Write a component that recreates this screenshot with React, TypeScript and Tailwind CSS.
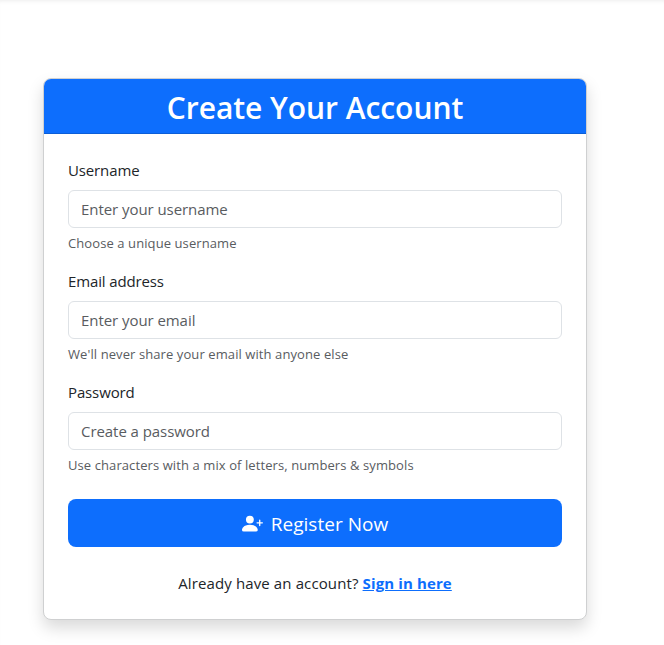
import { BsPersonPlusFill } from "react-icons/bs";

const fields = [
  { id: "username", label: "Username", type: "text", placeholder: "Enter your username", help: "Choose a unique username" },
  { id: "email", label: "Email address", type: "email", placeholder: "Enter your email", help: "We'll never share your email with anyone else" },
  { id: "password", label: "Password", type: "password", placeholder: "Create a password", help: "Use characters with a mix of letters, numbers & symbols" },
];

export default function App() {
  return (
    <div className="h-[645px] overflow-hidden bg-white pl-[43px] pt-[78px] font-['Open_Sans','Noto_Sans',sans-serif] text-[15px] text-[#212529] shadow-[inset_0_4px_4px_-3px_rgba(0,0,0,0.075)]">
      <main className="h-[542px] w-[544px] rounded-lg border border-[#cfd0d1] bg-white shadow-[0_8px_16px_rgba(0,0,0,0.15)]">
        <header className="flex h-[55px] items-center justify-center rounded-t-[7px] border-b border-[#0b5ed7] bg-[#0d6efd] pt-[3px] text-white">
          <h1 className="whitespace-nowrap text-[30px] font-semibold leading-[38px] tracking-[-0.05px]">Create Your Account</h1>
        </header>
        <form className="p-6" onSubmit={(e) => e.preventDefault()}>
          {fields.map((f) => (
            <div key={f.id} className="mb-4 h-[95px]">
              <label htmlFor={f.id} className="mb-2 block leading-6 tracking-[-0.13px]">{f.label}</label>
              <input id={f.id} type={f.type} placeholder={f.placeholder} className="block h-[38px] w-full rounded-md border border-[#dee2e6] px-3 pb-px tracking-[-0.06px] placeholder:text-[#595c5f]" />
              <p className="mt-1 whitespace-nowrap text-[13px] leading-[22px] tracking-[0.09px] text-[#595c5f]">{f.help}</p>
            </div>
          ))}
          <button className="mt-6 flex h-12 w-full items-center justify-center gap-2 rounded-lg bg-[#0d6efd] text-[19px] text-white">
            <BsPersonPlusFill className="mt-px size-[21px]" />
            <span className="mt-0.5 tracking-[0.04px]">Register Now</span>
          </button>
          <p className="mt-6 text-center leading-6 tracking-[0.12px]">
            Already have an account? <a href="#" className="font-bold text-[#0d6efd] underline">Sign in here</a>
          </p>
        </form>
      </main>
    </div>
  );
}
